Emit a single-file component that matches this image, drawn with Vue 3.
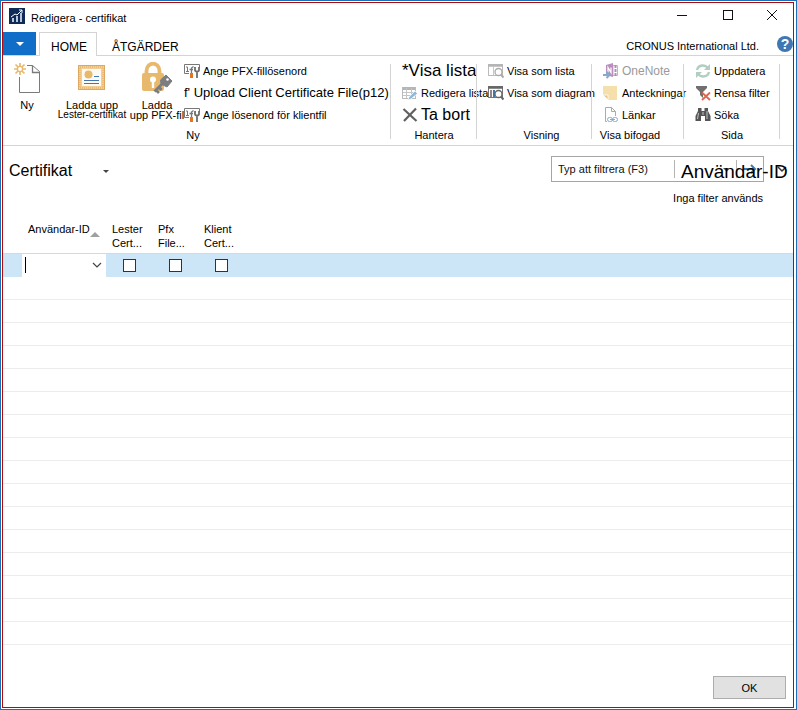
<script setup>
import { ref } from 'vue'

const groups = [
  {
    name: 'Ny',
    key: 'new',
    large: [
      { icon: 'new', lines: ['Ny'], key: 'new' },
      { icon: 'cert', lines: ['Ladda upp', 'Lester-certifikat'], key: 'cert' },
      { icon: 'lock', lines: ['Ladda', 'upp PFX-fil'], key: 'lock' }
    ],
    items: [
      { icon: 'pass', text: 'Ange PFX-fillösenord' },
      { text: "f' Upload Client Certificate File(p12)", size: 'medium' },
      { icon: 'pass', text: 'Ange lösenord för klientfil' }
    ]
  },
  {
    name: 'Hantera',
    key: 'manage',
    items: [
      { text: '*Visa lista', size: 'bigger' },
      { icon: 'edit', text: 'Redigera lista' },
      { icon: 'delete', text: 'Ta bort', size: 'big' }
    ]
  },
  {
    name: 'Visning',
    key: 'view',
    items: [
      { icon: 'list', text: 'Visa som lista' },
      { icon: 'chart', text: 'Visa som diagram' }
    ]
  },
  {
    name: 'Visa bifogad',
    key: 'attached',
    items: [
      { icon: 'onenote', text: 'OneNote', size: 'muted' },
      { icon: 'note', text: 'Anteckningar' },
      { icon: 'link', text: 'Länkar' }
    ]
  },
  {
    name: 'Sida',
    key: 'page',
    items: [
      { icon: 'refresh', text: 'Uppdatera' },
      { icon: 'clear', text: 'Rensa filter' },
      { icon: 'find', text: 'Söka' }
    ]
  }
]

const flags = [
  { name: 'Lester', rest: 'Cert...' },
  { name: 'Pfx', rest: 'File...' },
  { name: 'Klient', rest: 'Cert...' }
]
const userId = ref('')
const filter = ref('')
</script>

<template>
  <svg class="sprites" aria-hidden="true">
    <symbol id="i-new" viewBox="0 0 28 32">
      <path d="M6.500 15V30.500H26.500V9.500L19.500 3.500H14" fill="none" stroke="#7a7a7a" />
      <path d="M19.500 3.500V10.500H26.500" fill="none" stroke="#7a7a7a" stroke-width="1.300" />
      <path d="M7 1V4.500M7 9.500V13M1 7H4.500M9.500 7H13M2.500 2.500L5 5M9 9L11.500 11.500M11.500 2.500L9 5M5 9L2.500 11.500" stroke="#e8b96c" stroke-width="1.700" />
      <circle cx="7" cy="7" r="2.600" fill="none" stroke="#e8b96c" stroke-width="1.400" />
    </symbol>
    <symbol id="i-cert" viewBox="0 0 28 32">
      <rect x=".5" y="3.500" width="26" height="24" fill="#f1cf96" stroke="#dfa861" />
      <rect x="2" y="5" width="23" height="21" fill="none" stroke="#e3ad5f" stroke-dasharray="1 1" />
      <rect x="4" y="7" width="19" height="17" fill="#fffaf1" />
      <circle cx="10.500" cy="12.500" r="4" fill="#e8b96c" />
      <path d="M16 14.500H21M6 18.500H21M6 21.500H21" stroke="#3f78b5" />
    </symbol>
    <symbol id="i-lock" viewBox="0 0 32 32">
      <path d="M5.500 13V9A6.200 7 0 0 1 18.500 9V13" fill="none" stroke="#e8b96c" stroke-width="3.800" />
      <rect x="1" y="11" width="22" height="18" rx="2" fill="#e8b96c" />
      <circle cx="12" cy="17.500" r="3" fill="#fff" />
      <path d="M12 18V26" stroke="#fff" stroke-width="2.400" />
      <path d="M25 13L31 19L26 25L20 22L19.500 18Z" fill="#7b7d80" stroke="#7b7d80" stroke-linejoin="round" />
      <path d="M22 21L13.500 29.500M15 28L18 31M18 25L20.500 28" fill="none" stroke="#7b7d80" stroke-width="2.800" />
      <circle cx="26.500" cy="17.500" r="1.300" fill="#fff" />
    </symbol>
    <symbol id="i-pass" viewBox="0 0 16 16">
      <path d="M5 10.500H.5V1.500H15.500V5" fill="none" stroke="#777" />
      <path d="M2 4H3.500V8.500M2 8.500H5" fill="none" stroke="#777" />
      <path d="M7.500 10V5L9.500 3.500M5.500 6.500H9" fill="none" stroke="#777" stroke-width="1.300" />
      <path d="M11 4V7Q11 8.500 13 8.500Q15 8.500 15 7V4M13 8V15" fill="none" stroke="#6d6d6d" stroke-width="1.800" />
      <rect x="6" y="10" width="3" height="5" fill="#e37422" />
    </symbol>
    <symbol id="i-edit" viewBox="0 0 16 16">
      <rect x=".5" y="2.500" width="13" height="11" fill="#fff" stroke="#bbb" />
      <path d="M1 3.500H13" stroke="#b5b5b5" stroke-width="3" />
      <path d="M1 7.500H13M1 10.500H13M4.500 3V13M9.500 3V13" stroke="#c5c5c5" />
      <path d="M6 15L7 12L13 6L15.500 8.500L9 14Z" fill="#8db9dc" stroke="#fff" stroke-width=".7" />
    </symbol>
    <symbol id="i-delete" viewBox="0 0 16 16">
      <path d="M1.500 2L14.500 14M14 1.500L2 14" stroke="#606060" stroke-width="2.200" />
    </symbol>
    <symbol id="i-list" viewBox="0 0 16 16">
      <rect x=".5" y="1.500" width="14" height="11" fill="#fff" stroke="#bbb" />
      <path d="M0 2.500H15" stroke="#b5b5b5" stroke-width="2.500" />
      <path d="M5.500 4V12" stroke="#c8c8c8" />
      <circle cx="10.500" cy="9" r="3.500" fill="#fff" stroke="#aaa" stroke-width="1.300" />
      <path d="M13 11.500L15.500 14.500" stroke="#aaa" stroke-width="2" />
    </symbol>
    <symbol id="i-chart" viewBox="0 0 16 16">
      <rect x=".5" y="1.500" width="14" height="11" fill="#fff" stroke="#777" />
      <path d="M0 2.500H15" stroke="#666" stroke-width="2.500" />
      <path d="M3 5V12" stroke="#8a8a8a" stroke-width="2" />
      <path d="M6 5V12" stroke="#3a78b8" stroke-width="2" />
      <circle cx="10.500" cy="9" r="3.500" fill="#fff" stroke="#666" stroke-width="1.300" />
      <path d="M13 11.500L15.500 14.500" stroke="#666" stroke-width="2" />
    </symbol>
    <symbol id="i-onenote" viewBox="0 0 16 16">
      <path d="M10 2.500H14.500V12.500H10Z" fill="#fff" stroke="#cdaecd" />
      <path d="M12.500 2V5M12.500 6V9M12.500 10V13" stroke="#b58bb6" stroke-width="2" />
      <path d="M3 2L10 0V14L3 12Z" fill="#bb8fbd" />
      <path d="M5 9.500V4.500L8 9.500V4.500" fill="none" stroke="#fff" stroke-width="1.200" />
      <path d="M0 12H6M3.500 9L6.500 12L3.500 15" fill="none" stroke="#86a9cd" stroke-width="2" />
    </symbol>
    <symbol id="i-note" viewBox="0 0 16 16">
      <path d="M0 1H14V15H5L0 10Z" fill="#f5e0ab" />
      <path d="M0 10H5V15Z" fill="#e9c987" stroke="#fff" stroke-width=".8" />
    </symbol>
    <symbol id="i-link" viewBox="0 0 16 16">
      <path d="M4 14.500H2.500V.5H8.500L12.500 4.500V9M8.500 .5V4.500H12.500" fill="none" stroke="#aaa" />
      <rect x="4.500" y="10.500" width="5" height="4" rx="2" fill="#fff" stroke="#8ba9c8" />
      <rect x="9.500" y="10.500" width="5" height="4" rx="2" fill="#fff" stroke="#8ba9c8" />
      <path d="M7 12.500H12" stroke="#8ba9c8" />
    </symbol>
    <symbol id="i-refresh" viewBox="0 0 16 16">
      <path d="M2 7Q3 2.500 8 2.500Q11 2.500 13 5" fill="none" stroke="#b0cfc0" stroke-width="2.300" />
      <path d="M15 1V7H9Z" fill="#b0cfc0" />
      <path d="M14 9Q13 13.500 8 13.500Q5 13.500 3 11" fill="none" stroke="#b0cfc0" stroke-width="2.300" />
      <path d="M1 15V9H7Z" fill="#b0cfc0" />
    </symbol>
    <symbol id="i-clear" viewBox="0 0 16 16">
      <path d="M1 1H12V3L8 7V13L5 10V7L1 3Z" fill="#707070" />
      <path d="M7 7.500L15 15M15 7.500L7 15" stroke="#e0664e" stroke-width="1.800" />
    </symbol>
    <symbol id="i-find" viewBox="0 0 16 16">
      <path d="M3 1H6.500V4H9.500V1H13V4L15.500 9V14H10V9H6V14H.5V9L3 4Z" fill="#555" />
      <path d="M3.500 6L2.500 12M12 4V12M8 5V8" stroke="#c4c4c4" />
    </symbol>
  </svg>

  <div class="outer">
    <main class="window">
      <header class="titlebar">
        <svg class="logo" viewBox="0 0 16 16" aria-hidden="true">
          <rect width="16" height="16" fill="#102a57" />
          <path d="M3 14V10H5V14M7 14V8H9V14M11 14V5H13V14" fill="#b7c6dc" />
          <path d="M2 9L6 6L8 7L13 2M10 2H13V5" fill="none" stroke="#fff" />
        </svg>
        <span>Redigera - certifikat</span>
        <div class="controls">
          <button aria-label="Minimera"><svg viewBox="0 0 12 12"><path d="M1 6.500H11" /></svg></button>
          <button aria-label="Maximera"><svg viewBox="0 0 12 12"><rect x="1.500" y="1.500" width="9" height="9" /></svg></button>
          <button aria-label="Stäng"><svg viewBox="0 0 12 12"><path d="M1 1L11 11M11 1L1 11" /></svg></button>
        </div>
      </header>

      <nav class="tabs">
        <button class="file" aria-label="Arkiv"><svg viewBox="0 0 8 4"><path d="M0 0H8L4 4Z" fill="#fff" /></svg></button>
        <button class="tab active">HOME</button>
        <button class="tab">ÅTGÄRDER</button>
        <span class="company">CRONUS International Ltd.</span>
        <button class="help" aria-label="Hjälp">?</button>
      </nav>

      <section class="ribbon">
        <div v-for="g in groups" :key="g.key" class="group" :class="g.key">
          <div class="commands">
            <button v-for="b in g.large" :key="b.key" class="large" :class="b.key">
              <svg aria-hidden="true"><use :href="'#i-' + b.icon" /></svg>
              <span v-for="line in b.lines" :key="line">{{ line }}</span>
            </button>
            <div class="small-list">
              <button v-for="item in g.items" :key="item.text" class="small" :class="item.size">
                <svg v-if="item.icon" aria-hidden="true"><use :href="'#i-' + item.icon" /></svg>
                <span>{{ item.text }}</span>
              </button>
            </div>
          </div>
          <div class="group-name">{{ g.name }}</div>
        </div>
      </section>

      <section class="heading">
        <h1>Certifikat</h1>
        <button class="menu" aria-label="Meny"><svg viewBox="0 0 6 3"><path d="M0 0H6L3 3Z" fill="#444" /></svg></button>
        <div class="filter-area">
          <div class="filter">
            <input v-model="filter" aria-label="Filter" placeholder="Typ att filtrera (F3)" />
            <button class="field" aria-label="Fält"><svg viewBox="0 0 6 3"><path d="M0 0H6L3 3Z" fill="#444" /></svg></button>
            <button class="go" aria-label="Filtrera"><svg viewBox="0 0 14 12"><path d="M1 6H12M8 2L12 6L8 10" fill="none" stroke="#4178b0" stroke-width="2" /></svg></button>
            <span class="field-name">Användar-ID</span>
          </div>
          <button class="expand" aria-label="Expandera"><svg viewBox="0 0 10 8"><path d="M1 2L5 6L9 2" fill="none" stroke="#333" stroke-width="1.500" /></svg></button>
        </div>
      </section>
      <div class="filter-state">Inga filter används</div>

      <table>
        <colgroup>
          <col class="c-mark" /><col class="c-user" /><col v-for="f in flags" :key="f.name" class="c-flag" /><col />
        </colgroup>
        <thead>
          <tr>
            <th></th>
            <th><span class="sort">Användar-ID<svg viewBox="0 0 10 5"><path d="M0 5L5 0L10 5Z" fill="#a0a0a0" /></svg></span></th>
            <th v-for="f in flags" :key="f.name">{{ f.name }}<br />{{ f.rest }}</th>
            <th></th>
          </tr>
        </thead>
        <tbody>
          <tr class="selected">
            <td></td>
            <td class="user">
              <div class="combo">
                <i class="caret"></i>
                <input v-model="userId" aria-label="Användar-ID" />
                <button aria-label="Välj"><svg viewBox="0 0 10 8"><path d="M1 2L5 6L9 2" fill="none" stroke="#444" stroke-width="1.200" /></svg></button>
              </div>
            </td>
            <td v-for="f in flags" :key="f.name"><input type="checkbox" :aria-label="f.name" /></td>
            <td></td>
          </tr>
          <tr v-for="n in 16" :key="n"><td colspan="6"></td></tr>
        </tbody>
      </table>

      <footer><button>OK</button></footer>
    </main>
  </div>
</template>

<style>
body { background: #fff; }
</style>

<style scoped>
.sprites { position: absolute; width: 0; height: 0; }
.outer {
  box-sizing: border-box;
  min-height: 100vh;
  display: flex;
  padding: 1px 2px 1px 1px;
  border: 1px solid #1b6fb8;
  font: 11px/14px "Liberation Sans", Arial, sans-serif;
  color: #000;
}
.window {
  flex: 1;
  min-width: 0;
  display: flex;
  flex-direction: column;
  border: 1px solid #b00a0e;
}
button { font: inherit; color: inherit; background: none; border: 0; padding: 0; white-space: nowrap; }
button svg { display: block; flex: none; }
.titlebar { display: flex; align-items: center; height: 29px; padding-left: 6px; }
.titlebar > span { margin-left: 6px; }
.logo { width: 16px; height: 16px; margin-bottom: 4px; }
.controls { display: flex; margin: 0 0 5px auto; }
.controls button { width: 46px; height: 24px; display: grid; place-items: center; }
.controls button:last-child { width: 42px; }
.controls svg { width: 12px; height: 12px; fill: none; stroke: #111; }
.tabs { display: flex; height: 23px; border-bottom: 1px solid #d4d4d4; font-size: 12px; }
.file { width: 33px; height: 23px; background: #106ec8; display: grid; place-items: center; }
.file svg { width: 8px; height: 4px; }
.tab { padding: 6px 15px 0; }
.tab.active { box-sizing: border-box; margin-left: 3px; height: 24px; padding: 4px 9px 0 11px; background: #fff; border: 1px solid #d4d4d4; border-bottom: 0; }
.company { margin-left: auto; padding-top: 7px; font-size: 11px; }
.help { width: 16px; height: 16px; margin: 4px 0 0 18px; border-radius: 50%; background: #3e77b3; color: #fff; font-weight: bold; font-size: 14px; line-height: 16px; }
.ribbon {
  display: grid;
  grid-template-columns: 388fr 86fr 115fr 92fr 96fr 13fr;
  border-bottom: 1px solid #d4d4d4;
}
.group { position: relative; min-width: 0; height: 85px; padding-top: 4px; }
.group::after { content: ""; position: absolute; right: 0; top: 8px; bottom: 6px; border-right: 1px solid #d4d4d4; }
.commands { display: flex; height: 66px; padding-left: 11px; }
.new .commands { padding-left: 0; }
.large { display: flex; flex-direction: column; align-items: center; flex: none; padding-top: 2px; line-height: 10px; }
.large svg { width: 28px; height: 32px; margin-bottom: 6px; }
.large.new { width: 48px; }
.large.cert { width: 82px; }
.large.cert span + span { font-size: 10px; }
.large.lock { width: 48px; margin-right: 3px; }
.large.lock svg { width: 32px; }
.small-list { min-width: 0; }
.small { display: flex; align-items: center; gap: 3px; height: 22px; }
.small svg { width: 16px; height: 16px; }
.medium { font-size: 13px; }
.big { font-size: 16px; }
.bigger { font-size: 17px; }
.muted { font-size: 12px; color: #9a9a9a; }
.group-name { text-align: center; line-height: 19px; }
.new .group-name { padding-right: 8px; }
.view .group-name { padding-left: 14px; }
.attached .group-name { padding-right: 16px; }
.heading { display: flex; align-items: center; height: 26px; padding: 10px 6px 0 6px; }
h1 { margin: 4px 0 0; font-size: 16px; font-weight: normal; line-height: 20px; }
.menu { margin: 4px 0 0 31px; }
.menu svg, .field svg { width: 6px; height: 3px; }
.filter-area { margin-left: auto; display: flex; align-items: center; }
.filter { position: relative; box-sizing: border-box; width: 213px; height: 26px; display: flex; align-items: center; border: 1px solid #a5a5a5; }
.filter input { flex: 1; min-width: 0; height: 18px; box-sizing: border-box; border: 0; border-right: 1px solid #b4b4b4; margin: 0; padding: 0 6px; font: inherit; outline: 0; }
.filter input::placeholder { color: #111; opacity: 1; }
.field { width: 62px; height: 18px; padding-left: 48px; border-right: 1px solid #b4b4b4; }
.go { width: 26px; display: grid; place-items: center; }
.go svg { width: 14px; height: 12px; }
.field-name { position: absolute; left: 129px; top: 4px; font-size: 19px; line-height: 22px; white-space: nowrap; pointer-events: none; }
.expand { margin-left: 13px; }
.expand svg { width: 10px; height: 8px; }
.filter-state { padding: 9px 30px 0 0; text-align: right; }
table { width: 100%; table-layout: fixed; border-collapse: collapse; margin-top: 17px; }
.c-mark { width: 19px; }
.c-user { width: 84px; }
.c-flag { width: 46px; }
th { height: 31px; padding: 0 0 0 6px; font-weight: normal; text-align: left; vertical-align: top; white-space: nowrap; }
.sort { display: inline-flex; align-items: flex-end; }
.sort svg { width: 10px; height: 5px; margin-bottom: -1px; }
td { box-sizing: border-box; height: 23px; padding: 0; border-bottom: 1px solid #ececec; text-align: center; }
.selected td { height: 23px; background: #cde6f7; border-top: 1px solid #d8d8d8; border-bottom: 0; }
.selected .user { background: #fff; }
.combo { display: flex; align-items: center; padding: 0 4px 0 3px; }
.caret { width: 1px; height: 16px; background: #000; }
.combo input { flex: 1; min-width: 0; height: 18px; border: 0; padding: 0 2px; font: inherit; outline: 0; }
.combo svg { width: 10px; height: 8px; }
td input[type="checkbox"] { appearance: none; box-sizing: border-box; display: block; width: 13px; height: 13px; margin: 0 auto; border: 1px solid #333; background: #fff; }
td input[type="checkbox"]:checked { background: #333; }
footer { margin-top: auto; display: flex; justify-content: flex-end; padding: 8px 7px; }
footer button { width: 73px; height: 23px; border: 1px solid #adadad; background: #e1e1e1; }
</style>
